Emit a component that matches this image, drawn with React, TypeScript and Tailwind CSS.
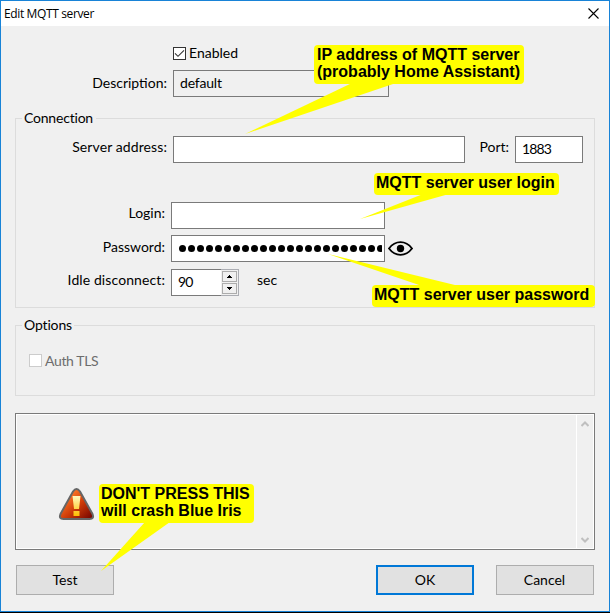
import type { ReactNode } from "react";

function Callout({ box, children }: { box: string; children: ReactNode }) {
  return (
    <div
      className={`absolute rounded-[4px] bg-[#ffff00] pt-px font-['Liberation_Sans',Arial,sans-serif] text-base font-bold leading-[17px] whitespace-nowrap ${box}`}
    >
      {children}
    </div>
  );
}

function Label({ className, children }: { className: string; children: ReactNode }) {
  return <span className={`shrink-0 text-right whitespace-nowrap leading-[17px] ${className}`}>{children}</span>;
}

function Field({ className, children }: { className: string; children?: ReactNode }) {
  return (
    <div className={`flex h-[27px] shrink-0 items-center overflow-hidden border border-[#7a7a7a] pl-1.5 leading-[19px] ${className}`}>
      {children}
    </div>
  );
}

function Button({ className, children }: { className: string; children: ReactNode }) {
  return (
    <button className={`flex h-[30px] w-[98px] items-center justify-center bg-[#e1e1e1] ${className}`}>
      {children}
    </button>
  );
}

function Spin({ path }: { path: string }) {
  return (
    <div className="flex h-[11px] w-[15px] items-center justify-center border border-[#acacac] bg-[#f0f0f0]">
      <svg width="5" height="3" viewBox="0 0 5 3" shapeRendering="crispEdges">
        <path d={path} />
      </svg>
    </div>
  );
}

function Group({ title, titleClass, className, children }: { title: string; titleClass: string; className: string; children: ReactNode }) {
  return (
    <section className={`ml-[14px] w-[580px] ${className}`}>
      <div className="flex h-[18px] items-center">
        <div className="mt-[9px] h-[9px] w-[7px] border-t border-l border-[#dcdcdc]" />
        <h2 className={`pl-[2px] leading-[18px] whitespace-nowrap ${titleClass}`}>{title}</h2>
        <div className="mt-[9px] h-[9px] flex-1 border-t border-r border-[#dcdcdc]" />
      </div>
      <div className="h-[calc(100%-18px)] border-x border-b border-[#dcdcdc]">{children}</div>
    </section>
  );
}

export default function App() {
  return (
    <div className="relative h-[613px] w-[610px] overflow-hidden bg-black font-[Lato,'Open_Sans',sans-serif] text-sm text-black">
      <main className="flex h-[612px] w-[610px] flex-col border border-[#1883d7] bg-[#f0f0f0]">
        <header className="flex h-[25px] shrink-0 items-center justify-between bg-white pr-[10px] pl-[3px]">
          <h1 className="font-['Open_Sans',sans-serif] text-xs leading-4 tracking-[-0.37px]">Edit MQTT server</h1>
          <svg className="mb-px" width="11" height="11" viewBox="0 0 11 11" fill="none" stroke="#000" strokeWidth="1.1">
            <path d="M.5.5l10 10M10.5.5l-10 10" />
          </svg>
        </header>

        <div className="mt-[19px] ml-[172px] flex h-[17px] items-center">
          <span className="flex h-[13px] w-[13px] items-center justify-center border border-[#333] bg-white">
            <svg width="11" height="11" viewBox="0 0 11 11" fill="none" stroke="#333" strokeWidth="1.1">
              <path d="M1 5.3l3 3 6-6" />
            </svg>
          </span>
          <span className="ml-[3px] pb-[2px] leading-[17px]">Enabled</span>
        </div>

        <div className="mt-[8px] flex items-center">
          <Label className="w-[166px] pb-[2px]">Description:</Label>
          <Field className="ml-[6px] w-[216px] pb-[2px] tracking-[-0.2px]">default</Field>
        </div>

        <Group title="Connection" titleClass="w-[74px] tracking-[-0.2px]" className="mt-[12px] h-[199px]">
          <div className="flex items-center pt-[9px]">
            <Label className="w-[151px] pb-[6px] tracking-[0.1px]">Server address:</Label>
            <Field className="ml-[6px] w-[292px] bg-white" />
            <Label className="w-[44px] pb-[6px]">Port:</Label>
            <Field className="ml-[6px] w-[68px] bg-white pb-[2px] tracking-[-0.9px]">1883</Field>
          </div>
          <div className="mt-[39px] flex items-center">
            <Label className="w-[149px] pb-[6px]">Login:</Label>
            <Field className="ml-[6px] w-[214px] bg-white" />
          </div>
          <div className="mt-[6px] flex items-center">
            <Label className="w-[149px] pb-[4px]">Password:</Label>
            <Field className="ml-[6px] w-[214px] bg-white pr-[2px]">
              <div className="flex gap-[2px] overflow-hidden pl-[1px]">
                {Array.from({ length: 23 }, (_, i) => (
                  <span key={i} className="h-[7px] w-[7px] shrink-0 rounded-full bg-black" />
                ))}
              </div>
            </Field>
            <svg className="ml-[3px]" width="25" height="15" viewBox="0 0 25 15" fill="none" stroke="#000" strokeWidth="1.8">
              <path d="M1 7.500C4 3.500 8 1.200 12.500 1.200S21 3.500 24 7.500c-3 4-7 6.300-11.500 6.300S4 11.500 1 7.500z" />
              <circle cx="12.500" cy="7.500" r="3.700" fill="#000" stroke="none" />
            </svg>
          </div>
          <div className="mt-[7px] flex items-center">
            <Label className="w-[149px] pb-[6px] tracking-[0.1px]">Idle disconnect:</Label>
            <div className="ml-[6px] flex h-[27px] w-[68px]">
              <div className="flex w-[50px] items-center border-y border-l border-[#7a7a7a] bg-white pb-[2px] pl-1.5 leading-[19px] tracking-[-0.8px]">90</div>
              <div className="flex w-[18px] flex-col gap-px border-y border-r border-[#abadb3] bg-[#f0f0f0] pt-px pl-px">
                <Spin path="M2 0h1v1h1v1h1v1H0V2h1V1h1z" />
                <Spin path="M0 0h5v1H4v1H3v1H2V2H1V1H0z" />
              </div>
            </div>
            <span className="ml-[18px] pb-[6px] leading-[17px]">sec</span>
          </div>
        </Group>

        <Group title="Options" titleClass="w-[52px] tracking-[-0.15px]" className="mt-[8px] h-[80px]">
          <div className="flex h-[35px] items-end pl-[13px] text-[#6d6d6d]">
            <span className="mb-[2px] h-[13px] w-[13px] shrink-0 border border-[#ccc] bg-white" />
            <span className="ml-[3px] leading-[17px] tracking-[-0.35px]">Auth TLS</span>
          </div>
        </Group>

        <div className="mt-[17px] ml-[14px] h-[137px] w-[580px] shrink-0 border border-[#7a7a7a]">
          <div className="flex h-full justify-end border border-white">
            <div className="flex w-[17px] flex-col items-center justify-between border-l border-white pt-[6px] pb-[5px]">
              <svg width="8" height="6" viewBox="0 0 8 6" fill="none" stroke="#bfbfbf" strokeWidth="2">
                <path d="M.5 5L4 1.500 7.500 5" />
              </svg>
              <svg width="8" height="6" viewBox="0 0 8 6" fill="none" stroke="#bfbfbf" strokeWidth="2">
                <path d="M.5 1L4 4.500 7.500 1" />
              </svg>
            </div>
          </div>
        </div>

        <footer className="mt-[15px] flex pl-[15px]">
          <Button className="border border-[#adadad] pb-px">Test</Button>
          <Button className="ml-[262px] border-2 border-[#0078d7] pb-px">OK</Button>
          <Button className="ml-[22px] border border-[#adadad] pr-px pb-px">Cancel</Button>
        </footer>
      </main>

      <svg className="absolute inset-0" width="610" height="613" viewBox="0 0 610 613" fill="#ffff00">
        <path d="M352 83h44L245 134z" />
        <path d="M423 194h26L360 219z" />
        <path d="M422 286h37L328 254z" />
        <path d="M145 522h25L101 571z" />
      </svg>
      <Callout box="left-[314px] top-[45px] h-[39px] w-[210px] pl-[3px]">
        IP address of MQTT server
        <br />
        (probably Home Assistant)
      </Callout>
      <Callout box="left-[374px] top-[173px] h-[22px] w-[185px] pl-[2px]">MQTT server user login</Callout>
      <Callout box="left-[372px] top-[285px] h-[22px] w-[223px] pl-[2px]">MQTT server user password</Callout>
      <Callout box="left-[99px] top-[484px] h-[39px] w-[155px] pl-[2px]">
        DON'T PRESS THIS
        <br />
        will crash Blue Iris
      </Callout>
      <svg className="absolute top-[487px] left-[58px]" width="37" height="34" viewBox="0 0 37 34">
        <defs>
          <linearGradient id="alert" x1="0" y1="0" x2="1" y2="1">
            <stop offset="0.2" stopColor="#ff7a2a" />
            <stop offset="0.55" stopColor="#cf3c08" />
            <stop offset="1" stopColor="#6d0000" />
          </linearGradient>
          <linearGradient id="mark" x1="0" y1="0" x2="0" y2="1">
            <stop offset="0" stopColor="#fff8c0" />
            <stop offset="1" stopColor="#ffbe00" />
          </linearGradient>
        </defs>
        <path d="M15 4.500Q18.500-.5 22 4.500L34.500 27Q36.500 32 31.500 32H5.500Q.5 32 2.500 27z" fill="url(#alert)" stroke="#666" strokeWidth="2" />
        <path d="M14.500 9h8l-1.500 13h-5zM15.500 24h6v5h-6z" fill="url(#mark)" />
      </svg>
    </div>
  );
}
